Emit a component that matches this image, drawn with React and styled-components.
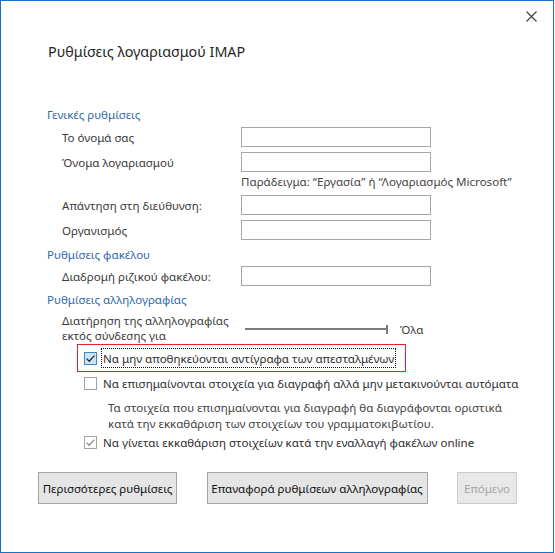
import styled, { createGlobalStyle } from "styled-components";

const GlobalStyle = createGlobalStyle`
  html, body {
    margin:0;
    padding:0;
    background:#ffffff;
  }
  body {
    font-family:"Noto Sans", "Open Sans", sans-serif;
    font-size:11.55px;
    color:#3a3a3a;
  }
`

const Window = styled.div`
  display:flex;
  flex-direction:column;
  box-sizing:border-box;
  width:554px;
  height:553px;
  border:1px solid #1a72c6;
  background:#ffffff;
`

const TitleBar = styled.div`
  display:flex;
  justify-content:flex-end;
  align-items:center;
  height:30px;
  padding-right:16px;
`

const CloseButton = styled.span`
  display:flex;
  align-items:center;
  justify-content:center;
  width:12px;
  height:12px;
  cursor:pointer;
`

const Heading = styled.h1`
  margin:10px 0 0 47px;
  font-size:14.3px;
  font-weight:400;
  line-height:22px;
  color:#262626;
`

const Form = styled.div`
  display:flex;
  flex-direction:column;
  margin-top:44px;
  padding-left:46px;
`

const SectionTitle = styled.div`
  margin-top:${p => p.$top || 0}px;
  line-height:16px;
  height:16px;
  color:#2f6aad;
`

const FieldRow = styled.div`
  display:grid;
  grid-template-columns:179px 190px;
  align-items:center;
  margin-top:${p => p.$top || 5}px;
  padding-left:15px;
`

const Label = styled.span`
  line-height:15px;
  color:#3a3a3a;
  white-space:nowrap;
`

const TextInput = styled.input`
  box-sizing:border-box;
  width:190px;
  height:20px;
  margin:0;
  border:1px solid #a6a6a6;
  background:#ffffff;
  outline:none;
  font:inherit;
`

const Hint = styled.div`
  margin:2px 0 0 194px;
  line-height:16px;
  color:#444444;
  white-space:nowrap;
`

const RetentionRow = styled.div`
  display:grid;
  grid-template-columns:183px 143px auto;
  align-items:center;
  margin-top:5px;
  padding-left:15px;
`

const Slider = styled.div`
  display:flex;
  align-items:center;
  height:30px;
  padding-top:2px;
  box-sizing:border-box;
`

const SliderTrack = styled.div`
  flex:1;
  height:2px;
  background:#7a7a7a;
`

const SliderThumb = styled.div`
  width:2px;
  height:9px;
  background:#7a7a7a;
`

const SliderValue = styled.span`
  margin-left:12px;
  padding-top:2px;
  color:#3a3a3a;
`

const HighlightBox = styled.div`
  display:flex;
  align-items:center;
  box-sizing:border-box;
  width:329px;
  height:28px;
  margin:1px 0 0 30px;
  padding-left:6px;
  border:1px solid #e0242b;
`

const CheckRow = styled.label`
  display:flex;
  align-items:center;
  height:${p => p.$height || 16}px;
  margin-top:${p => p.$top || 0}px;
  margin-left:${p => p.$indent || 0}px;
  cursor:default;
`

const Box = styled.span`
  display:flex;
  align-items:center;
  justify-content:center;
  box-sizing:border-box;
  width:13px;
  height:13px;
  flex:none;
  border:1px solid ${p => p.$hot ? "#3f86c6" : "#a3a3a3"};
  background:${p => p.$hot ? "#cce4f7" : "#ffffff"};
`

const CheckText = styled.span`
  margin-left:4px;
  padding:2px 1px 1px 1px;
  border:1px ${p => p.$focus ? "dotted #111111" : "solid transparent"};
  line-height:15px;
  color:#2e2e2e;
  white-space:nowrap;
`

const Note = styled.div`
  margin:9px 0 0 61px;
  line-height:15.6px;
  color:#444444;
`

const ButtonBar = styled.div`
  display:flex;
  justify-content:space-between;
  margin-top:22px;
  padding:0 36px 0 37px;
`

const Button = styled.button`
  box-sizing:border-box;
  width:${p => p.$w}px;
  height:32px;
  padding:0;
  border:1px solid ${p => p.disabled ? "#cccccc" : "#a3a3a3"};
  background:${p => p.disabled ? "#e8e8e8" : "#e5e5e5"};
  color:${p => p.disabled ? "#a6a6a6" : "#111111"};
  font:inherit;
  cursor:${p => p.disabled ? "default" : "pointer"};
`

const CloseIcon = () => (
  <svg width="11" height="11" viewBox="0 0 11 11">
    <path d="M0.5 0.5 L10.5 10.5 M10.5 0.5 L0.5 10.5" stroke="#3c3c3c" strokeWidth="1.1" fill="none" />
  </svg>
)

const CheckMark = ({ color }) => (
  <svg width="11" height="11" viewBox="0 0 11 11">
    <path d="M1.6 5.6 L4.2 8.2 L9.4 2.6" stroke={color} strokeWidth="1.3" fill="none" />
  </svg>
)

const Checkbox = ({ checked, hot, muted }) => (
  <Box $hot={hot}>
    {checked && <CheckMark color={muted ? "#8a8a8a" : "#262626"} />}
  </Box>
)

const fields = [
  { label: "Το όνομά σας", top: 4 },
  { label: "Όνομα λογαριασμού", top: 5 },
]

const fieldsAfterHint = [
  { label: "Απάντηση στη διεύθυνση:", top: 5 },
  { label: "Οργανισμός", top: 5 },
]

export default function App() {
  return (
    <>
      <GlobalStyle />
      <Window>
        <TitleBar>
          <CloseButton><CloseIcon /></CloseButton>
        </TitleBar>
        <Heading>Ρυθμίσεις λογαριασμού IMAP</Heading>
        <Form>
          <SectionTitle>Γενικές ρυθμίσεις</SectionTitle>
          {fields.map(f => (
            <FieldRow key={f.label} $top={f.top}>
              <Label>{f.label}</Label>
              <TextInput />
            </FieldRow>
          ))}
          <Hint>Παράδειγμα: “Εργασία” ή “Λογαριασμός Microsoft”</Hint>
          {fieldsAfterHint.map(f => (
            <FieldRow key={f.label} $top={f.top}>
              <Label>{f.label}</Label>
              <TextInput />
            </FieldRow>
          ))}

          <SectionTitle $top={7}>Ρυθμίσεις φακέλου</SectionTitle>
          <FieldRow $top={3}>
            <Label>Διαδρομή ριζικού φακέλου:</Label>
            <TextInput />
          </FieldRow>

          <SectionTitle $top={6}>Ρυθμίσεις αλληλογραφίας</SectionTitle>
          <RetentionRow>
            <Label>Διατήρηση της αλληλογραφίας<br />εκτός σύνδεσης για</Label>
            <Slider>
              <SliderTrack />
              <SliderThumb />
            </Slider>
            <SliderValue>Όλα</SliderValue>
          </RetentionRow>

          <HighlightBox>
            <CheckRow $height={26}>
              <Checkbox checked hot />
              <CheckText $focus>Να μην αποθηκεύονται αντίγραφα των απεσταλμένων</CheckText>
            </CheckRow>
          </HighlightBox>

          <CheckRow $top={3} $indent={37}>
            <Checkbox />
            <CheckText>Να επισημαίνονται στοιχεία για διαγραφή αλλά μην μετακινούνται αυτόματα</CheckText>
          </CheckRow>

          <Note>
            Τα στοιχεία που επισημαίνονται για διαγραφή θα διαγράφονται οριστικά<br />
            κατά την εκκαθάριση των στοιχείων του γραμματοκιβωτίου.
          </Note>

          <CheckRow $top={3} $indent={37}>
            <Checkbox checked muted />
            <CheckText>Να γίνεται εκκαθάριση στοιχείων κατά την εναλλαγή φακέλων online</CheckText>
          </CheckRow>
        </Form>

        <ButtonBar>
          <Button $w={139}>Περισσότερες ρυθμίσεις</Button>
          <Button $w={221}>Επαναφορά ρυθμίσεων αλληλογραφίας</Button>
          <Button $w={60} disabled>Επόμενο</Button>
        </ButtonBar>
      </Window>
    </>
  )
}
